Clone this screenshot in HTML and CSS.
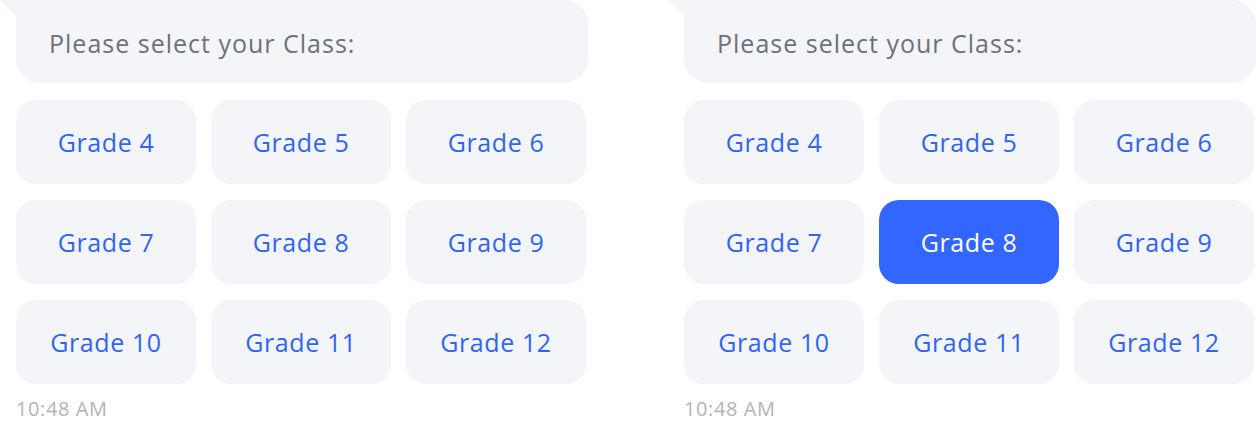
FILE: index.html
```html
<!doctype html>
<html>
<head>
	<meta charset="utf-8">
	<title>Select Class</title>
	<link rel="stylesheet" href="styles.css">
</head>
<body>
	<div class="chats">

		<div class="msg">
			<div class="bubble">Please select your Class:</div>
			<div class="grades">
				<button class="grade">Grade 4</button>
				<button class="grade">Grade 5</button>
				<button class="grade">Grade 6</button>
				<button class="grade">Grade 7</button>
				<button class="grade">Grade 8</button>
				<button class="grade">Grade 9</button>
				<button class="grade">Grade 10</button>
				<button class="grade">Grade 11</button>
				<button class="grade">Grade 12</button>
			</div>
			<div class="time">10:48 AM</div>
		</div>

		<div class="msg">
			<div class="bubble">Please select your Class:</div>
			<div class="grades">
				<button class="grade">Grade 4</button>
				<button class="grade">Grade 5</button>
				<button class="grade">Grade 6</button>
				<button class="grade">Grade 7</button>
				<button class="grade active">Grade 8</button>
				<button class="grade">Grade 9</button>
				<button class="grade">Grade 10</button>
				<button class="grade">Grade 11</button>
				<button class="grade">Grade 12</button>
			</div>
			<div class="time">10:48 AM</div>
		</div>

	</div>
</body>
</html>
```

FILE: styles.css
```css
body{
	margin: 0;
	padding: 0;
	background: #fff;
	font-family: "Open Sans", "Noto Sans", sans-serif;
}
.chats{
	display: flex;
	gap: 80px;
}
.msg{
	width: 572px;
	padding-left: 16px;
}
.bubble{
	position: relative;
	height: 83px;
	box-sizing: border-box;
	padding: 3px 0 0 33px;
	display: flex;
	align-items: center;
	background: #f4f5f9;
	border-radius: 0 24px 24px 24px;
	color: #6c717c;
	font-size: 25px;
	letter-spacing: 1px;
}
.bubble:before{
	content: "";
	position: absolute;
	left: -16px;
	top: 0;
	width: 16px;
	height: 16px;
	background: #f4f5f9;
	clip-path: polygon(0 0, 100% 0, 100% 100%);
}
.grades{
	display: grid;
	grid-template-columns: repeat(3, 180px);
	column-gap: 15px;
	row-gap: 16px;
	margin-top: 17px;
}
.grade{
	height: 84px;
	border: 0;
	border-radius: 20px;
	background: #f4f5f9;
	color: #2f64f5;
	font-family: inherit;
	font-size: 25px;
	letter-spacing: 0.6px;
	padding: 0;
	cursor: pointer;
}
.grade.active{
	background: #3366ff;
	color: #fff;
}
.time{
	margin-top: 11px;
	color: #b4b4b4;
	font-size: 20px;
	letter-spacing: 0.6px;
}
```
